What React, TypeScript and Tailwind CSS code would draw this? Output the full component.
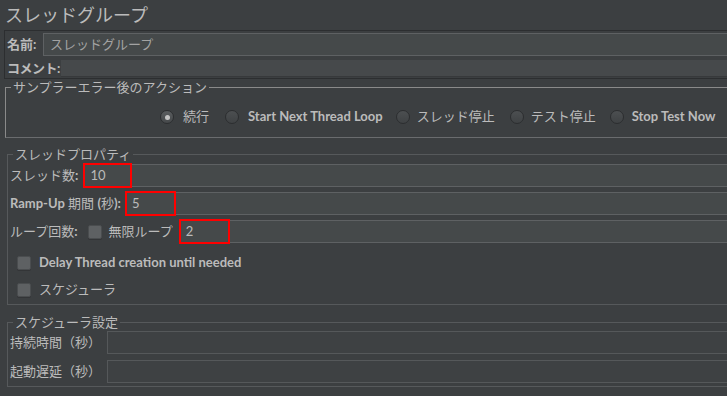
import React from 'react';

function B({ children }: { children: React.ReactNode }) {
  return <span className="font-bold">{children}</span>;
}

function Radio({ checked = false }: { checked?: boolean }) {
  return (
    <span
      className={
        'flex h-[14px] w-[14px] shrink-0 items-center justify-center rounded-full border ' +
        (checked
          ? 'border-[#2c2e30] bg-[linear-gradient(#5a5d5f,#46494b)]'
          : 'border-[#2c2e30] bg-[linear-gradient(#4c4f51,#3f4244)]')
      }
    >
      {checked && <span className="h-[5px] w-[5px] rounded-full bg-[#c4c4c4]" />}
    </span>
  );
}

function Check() {
  return (
    <span className="block h-[14px] w-[14px] shrink-0 rounded-[2px] border border-[#4a4d4f] bg-[#5e6163] shadow-[0_1px_0_#333537]" />
  );
}

function Field({
  value,
  red,
  disabled,
  dim,
}: {
  value?: string;
  red?: string;
  disabled?: boolean;
  dim?: boolean;
}) {
  return (
    <div
      className={
        'relative flex h-[23px] flex-1 items-center border-y border-l pl-[6px] text-[13px] ' +
        (disabled ? 'border-[#55585a] bg-[#3e4143]' : 'border-[#5e6163] bg-[#45494a]') +
        (dim ? ' text-[#a3a3a3]' : '')
      }
    >
      {value}
      {red && <div className={'absolute left-[-1px] top-[-2px] h-[25px] border-2 border-[#ff0000] ' + red} />}
    </div>
  );
}

function Group({
  title,
  className,
  children,
}: {
  title: string;
  className: string;
  children: React.ReactNode;
}) {
  return (
    <fieldset className={'border-y border-l border-r-0 ' + className}>
      <legend className="ml-[5px] px-[2px] text-[13px] leading-[15px]">{title}</legend>
      {children}
    </fieldset>
  );
}

export default function App() {
  return (
    <div className="h-[396px] w-[727px] overflow-hidden whitespace-nowrap bg-[#3c3f41] font-[Lato,'Noto_Sans_CJK_JP',sans-serif] text-[13px] text-[#bbbbbb]">
      <div className="h-[30px] pl-[5px] text-[18px] leading-[30px]">スレッドグループ</div>

      <div className="ml-[4px] border-y border-l border-[#2c2e30] pl-[2px] pt-[2px] pb-[1px]">
        <div className="flex items-center">
          <span className="w-[36px] shrink-0 font-bold leading-[17px]">名前:</span>
          <Field value="スレッドグループ" dim />
        </div>
        <div className="mt-[4px] flex h-[17px] items-center">
          <span className="w-[54px] shrink-0 font-bold leading-[17px] tracking-[-0.5px]">コメント:</span>
          <div className="h-[17px] flex-1 border-b border-[#37393b] bg-[#46494b]" />
        </div>
      </div>

      <Group title="サンプラーエラー後のアクション" className="ml-[5px] mt-[1px] border-[#8a8a8a] border-b-[#6a6c6e]">
        <div className="flex h-[42px] items-center pl-[154px] pt-[2px]">
          <Radio checked />
          <span className="ml-[9px]">続行</span>
          <span className="ml-[16px]"><Radio /></span>
          <span className="ml-[9px]"><B>Start Next Thread Loop</B></span>
          <span className="ml-[13px]"><Radio /></span>
          <span className="ml-[7px]">スレッド停止</span>
          <span className="ml-[15px]"><Radio /></span>
          <span className="ml-[7px]">テスト停止</span>
          <span className="ml-[14px]"><Radio /></span>
          <span className="ml-[8px]"><B>Stop Test Now</B></span>
        </div>
      </Group>

      <Group title="スレッドプロパティ" className="ml-[7px] mt-[9px] border-[#56595b]">
        <div className="pl-[2px]">
          <div className="mt-[2px] flex items-center gap-[5px]">
            <span>スレッド数<B>:</B></span>
            <Field value="10" red="w-[49px]" />
          </div>
          <div className="mt-[5px] flex items-center gap-[4px]">
            <span><B>Ramp-Up</B> 期間 <B>(</B>秒<B>):</B></span>
            <Field value="5" red="w-[51px]" />
          </div>
          <div className="mt-[5px] flex items-center">
            <span>ループ回数<B>:</B></span>
            <span className="ml-[10px]"><Check /></span>
            <span className="ml-[7px]">無限ループ</span>
            <div className="ml-[6px] flex flex-1">
              <Field value="2" red="w-[51px]" />
            </div>
          </div>
          <div className="mt-[7px] flex h-[26px] items-center pl-[7px]">
            <Check />
            <span className="ml-[8px]"><B>Delay Thread creation until needed</B></span>
          </div>
          <div className="flex h-[28px] items-center pl-[7px]">
            <Check />
            <span className="ml-[8px]">スケジューラ</span>
          </div>
        </div>
      </Group>

      <Group title="スケジューラ設定" className="ml-[7px] mt-[10px] border-[#56595b]">
        <div className="grid grid-cols-[97px_1fr] items-center gap-y-[6px] pl-[2px] pt-[1px] pb-[3px]">
          <span>持続時間（秒）</span>
          <Field disabled />
          <span>起動遅延（秒）</span>
          <Field disabled />
        </div>
      </Group>
    </div>
  );
}
